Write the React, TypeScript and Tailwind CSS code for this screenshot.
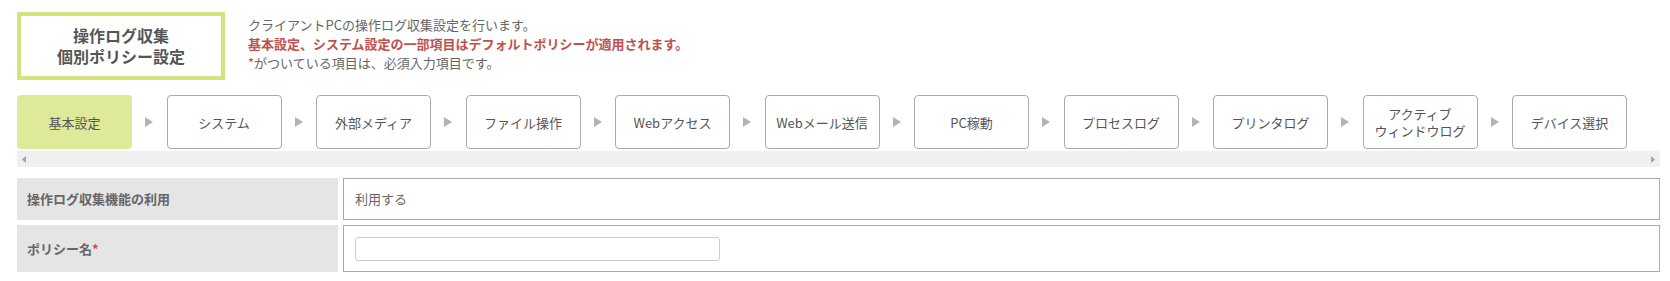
// App.tsx
const TABS = [
  "基本設定",
  "システム",
  "外部メディア",
  "ファイル操作",
  "Webアクセス",
  "Webメール送信",
  "PC稼動",
  "プロセスログ",
  "プリンタログ",
  "アクティブ\nウィンドウログ",
  "デバイス選択",
];

const Arrow = () => (
  <div className="w-[34.5px] flex justify-center shrink-0">
    <svg width="8" height="10" viewBox="0 0 8 10">
      <path d="M0 0 L8 5 L0 10 Z" fill="#b3b3b3" />
    </svg>
  </div>
);

export default function App() {
  return (
    <div
      className="w-[1670px] h-[281px] bg-white pl-[17px] pr-[10px] pt-[12px] text-[#666]"
      style={{ fontFamily: '"Noto Sans CJK JP", "Noto Sans", sans-serif' }}
    >
      <div className="flex items-start">
        <div className="w-[208px] h-[68px] border-4 border-[#d6e27b] flex flex-col items-center justify-center text-[16px] leading-[21px] font-bold text-[#555]">
          <span>操作ログ収集</span>
          <span>個別ポリシー設定</span>
        </div>
        <div className="ml-[23px] mt-[3px] text-[13px] leading-[19px]">
          <p>クライアントPCの操作ログ収集設定を行います。</p>
          <p className="font-bold text-[#c0504d]">
            基本設定、システム設定の一部項目はデフォルトポリシーが適用されます。
          </p>
          <p>
            <span className="text-[#c0504d]">*</span>がついている項目は、必須入力項目です。
          </p>
        </div>
      </div>

      <div className="mt-[15px]">
        <div className="flex items-center h-[54px]">
          {TABS.map((tab, i) => (
            <div key={tab} className="flex items-center">
              <div
                className={
                  i === 0
                    ? "w-[115px] h-[54px] rounded-[4px] bg-[#dee99a] flex items-center justify-center text-[13px] leading-[17px] text-[#555] text-center whitespace-pre-line"
                    : "w-[115px] h-[54px] rounded-[4px] border border-[#aaa] bg-white flex items-center justify-center text-[13px] leading-[17px] text-[#555] text-center whitespace-pre-line"
                }
              >
                {tab}
              </div>
              {i < TABS.length - 1 && <Arrow />}
            </div>
          ))}
        </div>
        <div className="mt-[2px] h-[16px] bg-[#f0f0f0] flex items-center justify-between px-[5px]">
          <svg width="4" height="7" viewBox="0 0 4 7">
            <path d="M4 0 L0 3.5 L4 7 Z" fill="#a3a3a3" />
          </svg>
          <svg width="4" height="7" viewBox="0 0 4 7">
            <path d="M0 0 L4 3.5 L0 7 Z" fill="#a3a3a3" />
          </svg>
        </div>
      </div>

      <div className="mt-[11px] flex flex-col gap-[5px] text-[13px]">
        <div className="flex gap-[5px] h-[42px]">
          <div className="w-[321px] bg-[#e5e5e5] flex items-center pl-[10px] font-bold text-[#666]">
            操作ログ収集機能の利用
          </div>
          <div className="flex-1 border border-[#aaa] flex items-center pl-[11px] text-[#666]">
            利用する
          </div>
        </div>
        <div className="flex gap-[5px] h-[47px]">
          <div className="w-[321px] bg-[#e5e5e5] flex items-center pl-[10px] font-bold text-[#666]">
            ポリシー名<span className="text-[#c0504d]">*</span>
          </div>
          <div className="flex-1 border border-[#aaa] flex items-center pl-[11px]">
            <input
              type="text"
              className="w-[365px] h-[24px] border border-[#ccc] rounded-[3px] bg-white outline-none"
            />
          </div>
        </div>
      </div>
    </div>
  );
}
